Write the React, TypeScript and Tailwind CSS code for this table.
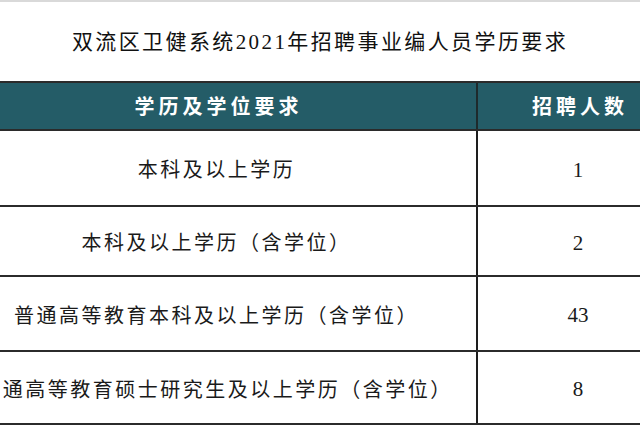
import React from "react";

const rows = [
  { text: "本科及以上学历", n: "1", h: "h-[74px]" },
  { text: "本科及以上学历（含学位）", n: "2", h: "h-[68px]" },
  { text: "普通高等教育本科及以上学历（含学位）", n: "43", h: "h-[73px]" },
  { text: "普通高等教育硕士研究生及以上学历（含学位）", n: "8", h: "h-[71px]" },
];

export default function App() {
  return (
    <div className="w-[640px] h-[426px] overflow-hidden bg-white relative" style={{ fontFamily: '"Liberation Serif", "Noto Sans CJK SC", serif' }}>
      <div className="h-[2px] bg-[#d9d9d9]" />
      <div className="h-[79px] flex items-center justify-center">
        <span className="text-[21px] tracking-[2.4px] text-[#111] leading-none pt-[2px]">双流区卫健系统2021年招聘事业编人员学历要求</span>
      </div>
      <div className="w-[721px] ml-[-43px] border-t-2 border-[#2b2b2b]">
        <div className="flex h-[48px] bg-[#245c67] border-b-2 border-[#2b2b2b] text-white font-bold text-[20px] tracking-[4px]" style={{ fontFamily: '"Noto Sans CJK SC", sans-serif' }}>
          <div className="w-[521px] border-r-2 border-[#1e2a2c] flex items-center justify-center pl-[4px]">学历及学位要求</div>
          <div className="w-[200px] flex items-center justify-center pl-[4px]">招聘人数</div>
        </div>
        {rows.map((r, i) => (
          <div key={i} className={`flex ${r.h} box-content border-b-2 border-[#2b2b2b] text-[#1a1a1a]`}>
            <div className="w-[521px] border-r-2 border-[#1e1e1e] flex items-center justify-center pt-[4px]">
              <span className="text-[20px] tracking-[2.5px] leading-none">{r.text}</span>
            </div>
            <div className="w-[200px] flex items-center justify-center pt-[4px]">
              <span className="text-[21px] leading-none">{r.n}</span>
            </div>
          </div>
        ))}
      </div>
    </div>
  );
}
